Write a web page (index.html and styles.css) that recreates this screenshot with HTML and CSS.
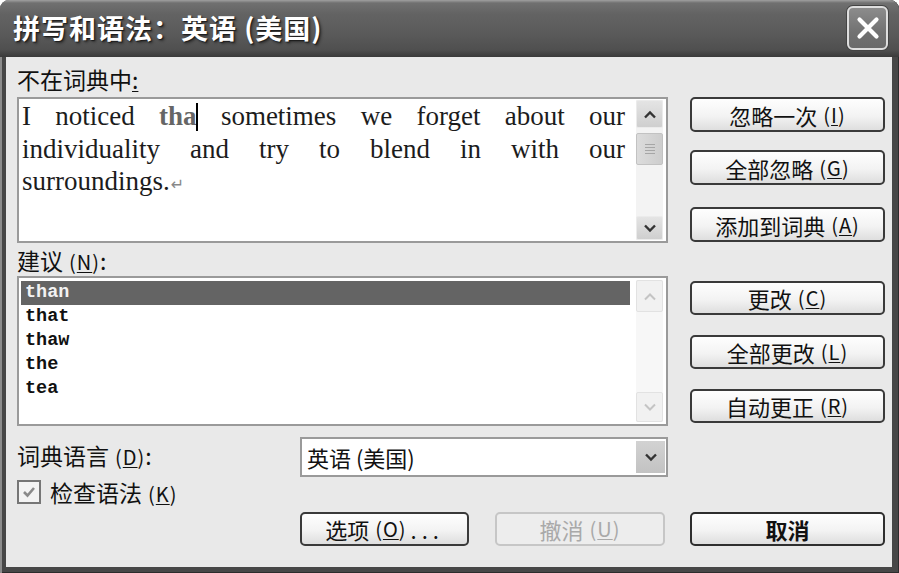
FILE: index.html
```html
<!doctype html>
<html lang="zh-CN">
<head>
  <meta charset="utf-8">
  <meta name="viewport" content="width=device-width,initial-scale=1">
  <title>拼写和语法</title>
  <link rel="stylesheet" href="styles.css">
</head>
<body>

<div class="window">
  <div class="titlebar">
    <span class="title">拼写和语法：英语 (美国)</span>
    <button class="close" aria-label="关闭">
      <svg viewBox="0 0 24 24" width="24" height="24"><path d="M3.5 3.5 L20.5 20.5 M20.5 3.5 L3.5 20.5" stroke="#fff" stroke-width="4.2" stroke-linecap="round"/></svg>
    </button>
  </div>

  <div class="dlg">
    <!-- not in dictionary -->
    <div class="lbl lbl-top">不在词典中<u>:</u></div>
    <div class="field sentence">
      <div class="text">
        <div class="ln">I noticed <span class="bad">tha</span><span class="caret"></span> sometimes we forget about our</div>
        <div class="ln">individuality and try to blend in with our</div>
        <div class="ln last">surroundings.<span class="pilcrow">↵</span></div>
      </div>
      <div class="scroll">
        <span class="sb-btn sb-up"><svg viewBox="0 0 14 9" width="14" height="9"><path d="M2 7.5 L7 2.5 L12 7.5" fill="none" stroke="#333" stroke-width="2.4"/></svg></span>
        <span class="sb-thumb"><span class="grip"></span></span>
        <span class="sb-fill"></span>
        <span class="sb-btn sb-down"><svg viewBox="0 0 14 9" width="14" height="9"><path d="M2 1.5 L7 6.5 L12 1.5" fill="none" stroke="#333" stroke-width="2.4"/></svg></span>
      </div>
    </div>
    <div class="btns btns-top">
      <button class="btn">忽略一次<span class="key">(<u>I</u>)</span></button>
      <button class="btn">全部忽略<span class="key">(<u>G</u>)</span></button>
      <button class="btn">添加到词典<span class="key">(<u>A</u>)</span></button>
    </div>

    <!-- suggestions -->
    <div class="lbl lbl-sug">建议<span class="key">(<u>N</u>)</span>:</div>
    <div class="field list">
      <div class="items">
        <div class="item sel">than</div>
        <div class="item">that</div>
        <div class="item">thaw</div>
        <div class="item">the</div>
        <div class="item">tea</div>
      </div>
      <div class="scroll off">
        <span class="sb-btn sb-up"><svg viewBox="0 0 14 9" width="14" height="9"><path d="M2 7.5 L7 2.5 L12 7.5" fill="none" stroke="#c4c4c4" stroke-width="2"/></svg></span>
        <span class="sb-fill"></span>
        <span class="sb-btn sb-down"><svg viewBox="0 0 14 9" width="14" height="9"><path d="M2 1.5 L7 6.5 L12 1.5" fill="none" stroke="#c4c4c4" stroke-width="2"/></svg></span>
      </div>
    </div>
    <div class="btns btns-mid">
      <button class="btn">更改<span class="key">(<u>C</u>)</span></button>
      <button class="btn">全部更改<span class="key">(<u>L</u>)</span></button>
      <button class="btn">自动更正<span class="key">(<u>R</u>)</span></button>
    </div>

    <!-- language + options -->
    <div class="lbl lbl-lang">词典语言<span class="key">(<u>D</u>)</span>:</div>
    <div class="combo">
      <span class="combo-val">英语 (美国)</span>
      <span class="combo-btn"><svg viewBox="0 0 14 9" width="14" height="9"><path d="M2 1.5 L7 6.5 L12 1.5" fill="none" stroke="#333" stroke-width="2.4"/></svg></span>
    </div>

    <label class="check">
      <span class="ck"><svg viewBox="0 0 16 16" width="16" height="16"><path d="M3 8 L6.5 11.5 L13 4" fill="none" stroke="#8a8a8a" stroke-width="2.6"/></svg></span>
      <span>检查语法<span class="key">(<u>K</u>)</span></span>
    </label>

    <div class="actions">
      <button class="btn btn-opt">选项<span class="key">(<u>O</u>)</span><span class="dots">...</span></button>
      <button class="btn btn-undo" disabled>撤消<span class="key">(<u>U</u>)</span></button>
    </div>
    <button class="btn btn-cancel">取消</button>
  </div>
</div>

</body>
</html>
```

FILE: styles.css
```css
body{
  margin:0; background:#fff;
  font-family:"Noto Sans CJK SC","Noto Sans",sans-serif; color:#111;
}
.window{
  width:899px; height:573px; display:flex; flex-direction:column;
  background:#474747; border-radius:9px 9px 0 0; overflow:hidden;
  box-shadow:inset 2px 0 0 #8c8c8c, inset -1px 0 0 #2c2c2c, inset 0 -1px 0 #2c2c2c;
}

/* title bar */
.titlebar{
  height:57px; flex:none; box-sizing:border-box;
  display:flex; align-items:center; justify-content:space-between;
  padding:0 11px 2px 13px;
  background:linear-gradient(#a0a0a0 0,#707070 3px,#636363 14px,#5a5a5a 34px,#4f4f4f 50px,#3a3a3a 57px);
}
.title{
  color:#fff; font-size:27px; font-weight:700; letter-spacing:1px;
  text-shadow:1px 1px 1px #1c1c1c, 2px 2px 3px rgba(0,0,0,.45);
}
.close{
  width:41px; height:44px; padding:0; box-sizing:border-box;
  border:2px solid #dedede; border-radius:6px;
  background:linear-gradient(#8c8c8c,#727272 60%,#6a6a6a);
  box-shadow:0 0 0 1px #444;
  display:flex; align-items:center; justify-content:center;
}

/* dialog body */
.dlg{
  flex:1; margin:0 7px 6px 6px; padding-left:11px;
  background:#e9e9e9;
  display:grid;
  grid-template-columns:261px 368px 195px;
  grid-template-rows:40px 146px 33px 150px 51px 30px 39px;
  column-gap:22px; align-content:start;
}
.lbl{font-size:23px; line-height:30px;}
.lbl-top{grid-column:1/3; grid-row:1; align-self:end; margin-bottom:3px;}
.lbl-sug{grid-column:1/3; grid-row:3; align-self:center; padding-top:2px;}
.lbl-lang{grid-column:1; grid-row:5; align-self:end; line-height:40px;}
.key{font-size:20px; margin-left:6px; letter-spacing:1px;}
u{text-decoration-thickness:1px; text-underline-offset:2px;}

.field{border:2px solid #9a9a9a; background:#fff; display:flex; box-sizing:border-box;}

/* sentence box */
.sentence{grid-column:1/3; grid-row:2;}
.text{
  flex:1; padding:1px 11px 0 3px;
  font-family:"Liberation Serif",serif; font-size:27px; line-height:32.5px; color:#1c1c1c;
}
.ln{text-align:justify; text-align-last:justify;}
.ln.last{text-align-last:left;}
.bad{color:#666; font-weight:700;}
.caret{
  display:inline-block; width:2px; height:28px; background:#000;
  vertical-align:-6px; margin:0 -1px 0 -1px;
}
.pilcrow{font-family:"DejaVu Sans",sans-serif; font-size:16px; color:#888; margin-left:1px;}

/* scrollbars */
.scroll{
  width:27px; flex:none; margin:1px 3px 1px 0;
  display:flex; flex-direction:column; background:#f3f3f3;
}
.sb-btn{
  flex:none; display:flex; align-items:center; justify-content:center;
  background:linear-gradient(#e4e4e4,#cfcfcf); border:1px solid #ebebeb; border-radius:2px;
}
.sb-up{height:28px; box-sizing:border-box;}
.sb-down{height:24px; box-sizing:border-box;}
.sb-thumb{
  flex:none; height:32px; margin-top:5px; box-sizing:border-box;
  background:linear-gradient(90deg,#dcdcdc,#cdcdcd); border:1px solid #c2c2c2; border-radius:2px;
  display:flex; align-items:center; justify-content:center;
}
.grip{width:10px; height:11px; background:repeating-linear-gradient(#a6a6a6 0 1px,transparent 1px 3px);}
.sb-fill{flex:1;}
.scroll.off{margin:2px 3px 2px 0; background:#f7f7f7;}
.scroll.off .sb-btn{background:#f1f1f1; border-color:#e2e2e2;}
.scroll.off .sb-up{height:32px;}
.scroll.off .sb-down{height:30px;}

/* suggestions */
.list{grid-column:1/3; grid-row:4;}
.items{
  flex:1; margin:3px 6px 0 2px;
  font-family:"Liberation Mono",monospace; font-weight:700; font-size:18.5px; line-height:24px;
}
.item{padding-left:4px;}
.item.sel{background:#646464; color:#f2f2f2;}

/* buttons */
.btn{
  height:34px; width:100%; padding:0; box-sizing:border-box;
  border:2px solid #3a3a3a; border-radius:5px;
  background:linear-gradient(#fefefe,#f3f3f3 55%,#dedede);
  font-family:"Noto Sans CJK SC",sans-serif; font-size:22px; color:#111; line-height:1;
  display:flex; align-items:center; justify-content:center;
}
.btns{grid-column:3; display:flex; flex-direction:column;}
.btns-top{grid-row:2;}
.btns-top .btn{height:35px;}
.btns-top .btn + .btn{margin-top:18px;}
.btns-top .btn:last-child{margin-top:22px;}
.btns-mid{grid-row:4; padding-top:5px; gap:20px;}

.combo{
  grid-column:2; grid-row:5; align-self:end; height:40px; box-sizing:border-box;
  border:2px solid #9a9a9a; background:#fff; display:flex;
}
.combo-val{flex:1; padding-left:5px; font-size:22px; line-height:36px;}
.combo-btn{
  width:29px; margin:2px 1px 2px 0; background:linear-gradient(#d2d2d2,#c2c2c2);
  display:flex; align-items:center; justify-content:center;
}

.check{grid-column:1; grid-row:6; display:flex; align-items:center; gap:9px; font-size:23px;}
.ck{
  width:24px; height:24px; box-sizing:border-box; border:2px solid #767676; background:#f3f3f3;
  display:flex; align-items:center; justify-content:center;
}

.actions{grid-column:2; grid-row:7; align-self:end; display:flex; gap:26px;}
.btn-opt{width:169px;}
.btn-undo{width:170px; border-color:#c6c6c6; color:#a9a9a9; background:#ededed;}
.dots{letter-spacing:5px; margin-left:4px;}
.btn-cancel{grid-column:3; grid-row:7; align-self:end; font-weight:700; border-color:#2e2e2e;}
```
